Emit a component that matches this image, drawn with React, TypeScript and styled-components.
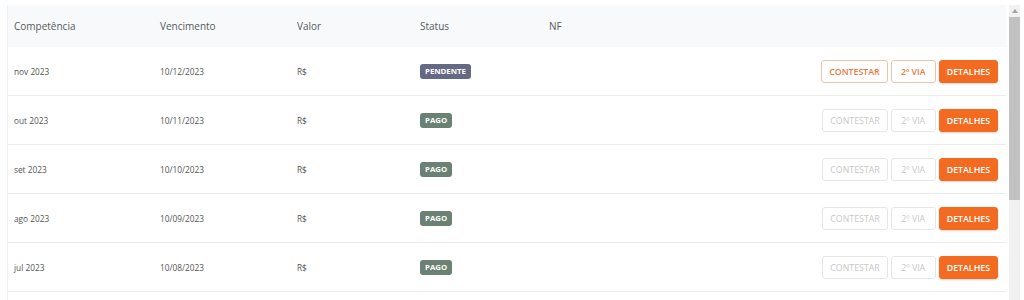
import styled, { createGlobalStyle } from "styled-components";

const GlobalStyle = createGlobalStyle`
  body {
    margin: 0;
    background: #ffffff;
    font-family: "Open Sans", "Liberation Sans", sans-serif;
  }
`;

const Page = styled.div`
  display: flex;
  flex-direction: row;
  padding: 5px 4px 0 7px;
  height: 295px;
  overflow: hidden;
`;

const Table = styled.div`
  flex: 1;
  display: flex;
  flex-direction: column;
  border-left: 1px solid #f1f1f1;
`;

const Grid = styled.div`
  display: grid;
  grid-template-columns: 146px 137px 123px 129px 1fr auto;
  align-items: center;
  padding: 0 8px 0 6px;
`;

const HeaderRow = styled(Grid)`
  height: 42px;
  background: #f8f9fa;
  font-size: 10px;
  color: #555a60;
`;

const Row = styled(Grid)`
  height: 48px;
  padding-top: 1px;
  box-sizing: border-box;
  height: 49px;
  border-bottom: 1px solid #ececec;
  font-size: 8.3px;
  color: #555;
`;

const Badge = styled.span<{ tone: "pending" | "paid" }>`
  justify-self: start;
  display: inline-block;
  padding: 2px 5px 3px;
  border-radius: 3px;
  font-size: 7.8px;
  font-weight: 700;
  line-height: 10px;
  color: #fff;
  background: ${({ tone }) => (tone === "pending" ? "#646a85" : "#6b8173")};
`;

const Actions = styled.div`
  display: flex;
  gap: 3px;
`;

const Button = styled.button<{ variant: "outline" | "disabled" | "solid" }>`
  height: 23px;
  min-width: 45px;
  padding: 0 7px;
  border-radius: 3px;
  font-family: inherit;
  font-size: 8.8px;
  cursor: pointer;
  border: 1px solid
    ${({ variant }) =>
      variant === "outline" ? "#f3c3a8" : variant === "disabled" ? "#e6e6e6" : "#f26b21"};
  background: ${({ variant }) => (variant === "solid" ? "#f26b21" : "#fff")};
  color: ${({ variant }) =>
    variant === "outline" ? "#ea7a3d" : variant === "disabled" ? "#c8c8c8" : "#fff"};
  font-weight: ${({ variant }) => (variant === "disabled" ? 400 : 600)};
  box-shadow: ${({ variant }) => (variant === "solid" ? "0 1px 2px rgba(0,0,0,0.18)" : "none")};
`;

const ScrollBar = styled.div`
  width: 11px;
  margin-left: 3px;
  display: flex;
  flex-direction: column;
  background: #f1f1f1;
`;

const ScrollArrow = styled.div`
  height: 12px;
  display: flex;
  align-items: center;
  justify-content: center;
`;

const Thumb = styled.div`
  height: 183px;
  background: #c1c1c1;
`;

const rows = [
  { comp: "nov 2023", venc: "10/12/2023", status: "PENDENTE" },
  { comp: "out 2023", venc: "10/11/2023", status: "PAGO" },
  { comp: "set 2023", venc: "10/10/2023", status: "PAGO" },
  { comp: "ago 2023", venc: "10/09/2023", status: "PAGO" },
  { comp: "jul 2023", venc: "10/08/2023", status: "PAGO" },
];

export default function App() {
  return (
    <>
      <GlobalStyle />
      <Page>
        <Table>
          <HeaderRow>
            <span>Competência</span>
            <span>Vencimento</span>
            <span>Valor</span>
            <span>Status</span>
            <span>NF</span>
            <span />
          </HeaderRow>
          {rows.map((r) => {
            const pending = r.status === "PENDENTE";
            return (
              <Row key={r.comp}>
                <span>{r.comp}</span>
                <span>{r.venc}</span>
                <span>R$</span>
                <Badge tone={pending ? "pending" : "paid"}>{r.status}</Badge>
                <span />
                <Actions>
                  <Button variant={pending ? "outline" : "disabled"}>CONTESTAR</Button>
                  <Button variant={pending ? "outline" : "disabled"}>2º VIA</Button>
                  <Button variant="solid">DETALHES</Button>
                </Actions>
              </Row>
            );
          })}
        </Table>
        <ScrollBar>
          <ScrollArrow>
            <svg width="6" height="4" viewBox="0 0 6 4">
              <path d="M0 4 L3 0 L6 4 Z" fill="#a3a3a3" />
            </svg>
          </ScrollArrow>
          <Thumb />
        </ScrollBar>
      </Page>
    </>
  );
}
